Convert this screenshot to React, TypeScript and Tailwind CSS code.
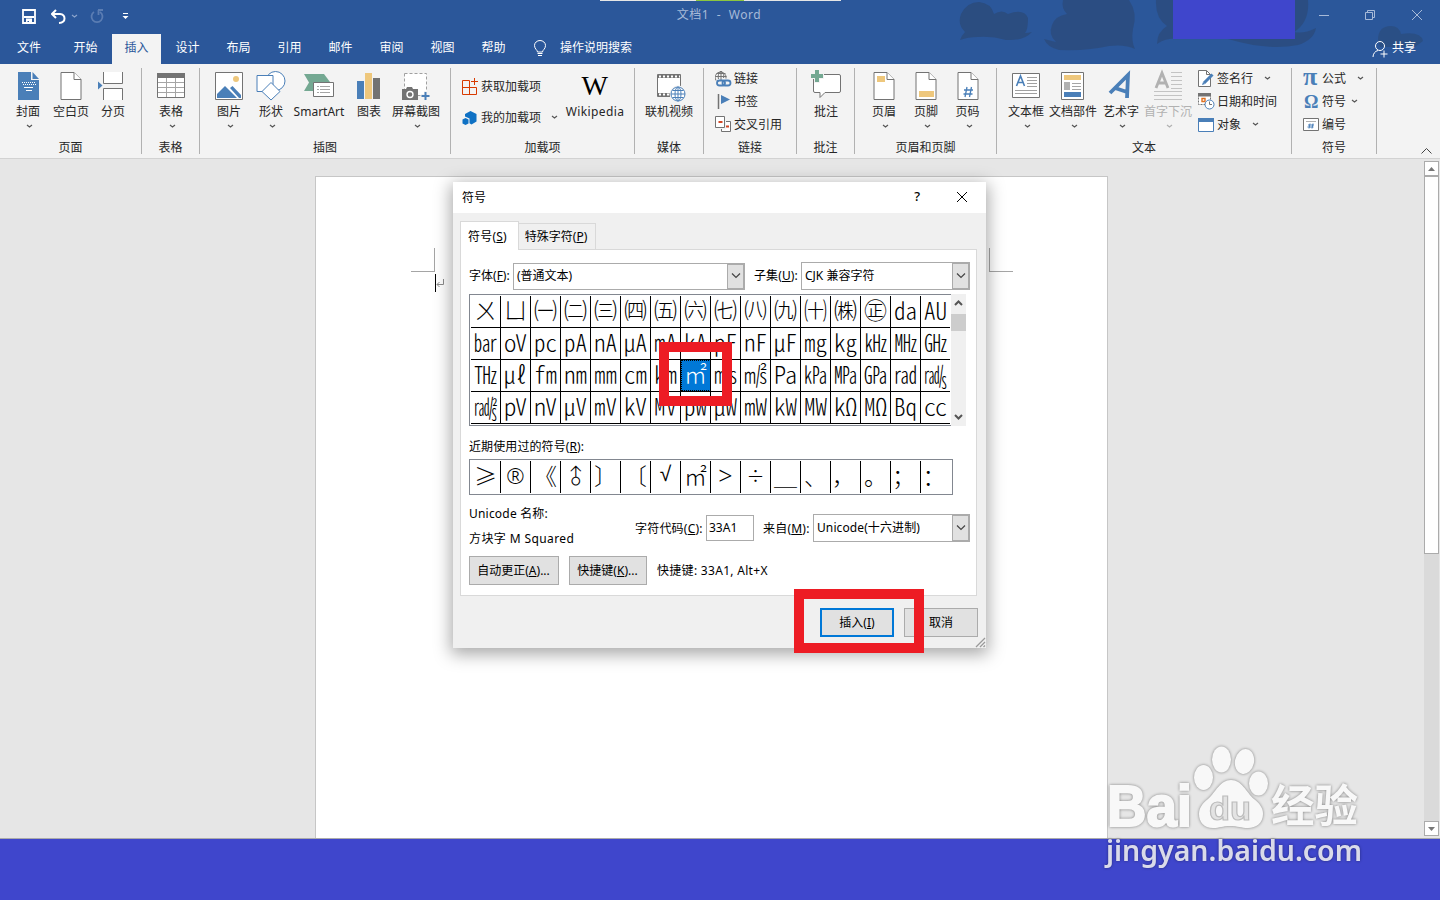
import type { ReactNode } from "react";

const UI = "font-['Noto_Sans','Noto_Sans_CJK_SC',sans-serif]";
const BLUE = "#4a7fb8";
const GRAY = "#737373";
const GOLD = "#eec77c";

const TABS = ["开始", "插入", "设计", "布局", "引用", "邮件", "审阅", "视图", "帮助"];

const SYMBOLS = [
  "ㄨㄩ㈠㈡㈢㈣㈤㈥㈦㈧㈨㈩㈱㊣㍲㍳",
  "㍴㍵㍶㎀㎁㎂㎃㎄㎊㎋㎌㎎㎏㎑㎒㎓",
  "㎔㎕㎙㎚㎜㎝㎞㎡㎧㎨㎩㎪㎫㎬㎭㎮",
  "㎯㎴㎵㎶㎷㎸㎹㎺㎼㎽㎾㎿㏀㏁㏃㏄",
];
const RECENT = ["≥", "®", "《", "♂", "〕", "〔", "√", "㎡", ">", "÷", "＿", "、", "，", "。", "；", "："];

// a few glyphs need another face or a turn to look right at this size
const GLYPH_STYLE: Record<string, string> = {
  "®": "font-['Noto_Sans',sans-serif] text-[22px] font-light",
  "♂": "-rotate-45 text-[21px]",
  "√": "font-['DejaVu_Sans',sans-serif] text-[21px] pb-0.5",
  ">": "font-['Noto_Sans',sans-serif] text-[25px] font-light",
  "÷": "text-[18px]",
  "，": "-ml-1",
  "；": "-ml-1",
  "：": "-ml-1",
};

function Chevron({ className = "", color = "#555" }: { className?: string; color?: string }) {
  return (
    <svg width="7" height="5" viewBox="0 0 7 5" className={`shrink-0 ${className}`}>
      <path d="M1 1l2.500 2L6 1" fill="none" stroke={color} strokeWidth="1.200" />
    </svg>
  );
}

function Group({ width, label, children }: { width: string; label: string; children: ReactNode }) {
  return (
    <div className={`flex shrink-0 ${width}`}>
      <div className="flex flex-1 min-w-0 flex-col">
        <div className="flex h-[76px]">{children}</div>
        <div className="h-4 text-center leading-4">{label}</div>
      </div>
      <div className="mt-1 h-[86px] w-px bg-[#b1b1b1]" />
    </div>
  );
}

interface BigProps { width: string; label: string; arrow?: boolean; disabled?: boolean; iconClass?: string; children: ReactNode; }

function Big({ width, label, arrow, disabled, iconClass = "", children }: BigProps) {
  return (
    <div className={`flex shrink-0 flex-col items-center pt-1 ${width} ${disabled ? "text-[#b1b1b1]" : ""}`}>
      <div className={`flex h-[34px] ${iconClass}`}>{children}</div>
      <div className="mt-0.5 h-4 leading-4 whitespace-nowrap">{label}</div>
      {arrow && <Chevron className="mt-1 ml-[3px]" color={disabled ? "#b1b1b1" : "#555"} />}
    </div>
  );
}

function Small({ label, arrow, gap = "ml-[11px]", children }: { label: string; arrow?: boolean; gap?: string; children: ReactNode }) {
  return (
    <div className="flex h-[23px] items-center whitespace-nowrap">
      <div className="w-[19px] shrink-0">{children}</div>
      {label}
      {arrow && <Chevron className={gap} />}
    </div>
  );
}

function Page({ children }: { children?: ReactNode }) {
  return (
    <svg width="22" height="34" viewBox="0 0 22 34">
      <path d="M1 4.500h13l7 7v20H1z" fill="#fff" stroke={GRAY} />
      <path d="M14 4.500v7h7" fill="#fff" stroke={GRAY} />
      {children}
    </svg>
  );
}

function PagesGroup() {
  return (
    <Group width="w-[142px]" label="页面">
      <Big width="w-[42px] ml-[7px]" label="封面" arrow>
        <svg width="21" height="34" viewBox="0 0 21 34">
          <path d="M0 4h13v8h8v20H0z" fill={BLUE} />
          <path d="M14.500 4l6.500 7h-6.500z" fill={BLUE} />
          <path d="M4 14.500h13M5 16.500h13" stroke="#fff" strokeDasharray="1 1" />
          <path d="M6 19.500h9M8 22.500h6" stroke="#fff" />
        </svg>
      </Big>
      <Big width="w-11" label="空白页"><Page /></Big>
      <Big width="w-10" label="分页" iconClass="-ml-1">
        <svg width="26" height="34" viewBox="0 0 26 34">
          <path d="M5 4h20v11H5zM5 20.500h20V32H5z" fill="#fff" />
          <path d="M5.500 4v11.500h19V4M5.500 32V20.500h19V32" fill="none" stroke={GRAY} />
          <path d="M0 13.500l4.500 4-4.500 4z" fill={BLUE} />
        </svg>
      </Big>
    </Group>
  );
}

function TablesGroup() {
  return (
    <Group width="w-[58px]" label="表格">
      <Big width="w-[58px]" label="表格" arrow>
        <svg width="28" height="34" viewBox="0 0 28 34">
          <path d="M.5 5.500h27v24H.5z" fill="#fff" stroke={GRAY} />
          <path d="M0 5h28v5H0z" fill={GRAY} />
          <path d="M1 14.500h26M1 19.500h26M1 24.500h26M9.500 10v19M18.500 10v19" stroke="#a5a5a5" />
        </svg>
      </Big>
    </Group>
  );
}

function IllustrationsGroup() {
  return (
    <Group width="w-[251px]" label="插图">
      <Big width="w-[42px] ml-2" label="图片" arrow>
        <svg width="28" height="34" viewBox="0 0 28 34">
          <path d="M.5 4.500h27v27H.5z" fill="#fff" stroke={GRAY} />
          <circle cx="21" cy="11" r="3" fill={GOLD} />
          <path d="M2 30v-4l8-8 12 12z" fill={BLUE} />
          <path d="M15 20l2.500-2 8.500 9v3h-2z" fill={BLUE} />
        </svg>
      </Big>
      <Big width="w-[42px]" label="形状" arrow>
        <svg width="30" height="34" viewBox="0 0 30 34">
          <circle cx="19.500" cy="13" r="9.500" fill="#fff" stroke={BLUE} />
          <path d="M1 7.500h16v16H1z" fill="#fff" stroke={BLUE} />
          <path d="M15 14.500l9 9-9 8.500-9-8.500z" fill="#fff" stroke={BLUE} />
        </svg>
      </Big>
      <Big width="w-[54px]" label="SmartArt">
        <svg width="30" height="34" viewBox="0 0 30 34">
          <path d="M0 6h20l6 8H10v9H0l5-8.500z" fill="#74a892" />
          <path d="M9.500 14.500h20v14h-20z" fill="#fff" stroke={GRAY} />
          <path d="M13 18.500h2M16 18.500h10M13 21.500h2M16 21.500h10M13 24.500h2M16 24.500h10" stroke="#a5a5a5" />
        </svg>
      </Big>
      <Big width="w-[46px]" label="图表">
        <svg width="24" height="34" viewBox="0 0 24 34">
          <path d="M0 13h7v18H0z" fill={BLUE} />
          <path d="M8 5h7v26H8z" fill={GOLD} />
          <path d="M16 10h7v21h-7z" fill={GRAY} />
        </svg>
      </Big>
      <Big width="w-12" label="屏幕截图" arrow>
        <svg width="30" height="34" viewBox="0 0 30 34">
          <path d="M3.500 5.500h22v22h-22z" fill="#fff" stroke="#a0a0a0" strokeDasharray="3 2" />
          <path d="M1 21h4l1-2h5l1 2h5v11H1z" fill={GRAY} />
          <circle cx="9" cy="26.500" r="3" fill="none" stroke="#fff" strokeWidth="1.400" />
          <path d="M25 23v10M20 28h10" stroke="#f3f3f3" strokeWidth="4" />
          <path d="M24.500 24v8M20.500 28h8" stroke={BLUE} strokeWidth="2" />
        </svg>
      </Big>
    </Group>
  );
}

function AddinsGroup() {
  return (
    <Group width="w-[184px]" label="加载项">
      <div className="ml-[11px] flex w-[97px] shrink-0 flex-col gap-2 pt-[11px]">
        <Small label="获取加载项">
          <svg width="16" height="17" viewBox="0 0 16 17" fill="none" stroke="#d83b01">
            <path d="M7.500 2.500h-7v14h14v-7H.5M7.500 2.500v14M12.500 0v7M9 3.500h7" />
          </svg>
        </Small>
        <Small label="我的加载项" arrow gap="ml-[10px]">
          <svg width="16" height="16" viewBox="0 0 16 16" fill="#0f71c4">
            <path d="M8.500 1l6 3v7.500l-5 3-2-1.300V8.500L3 6.500V4z" />
            <path d="M3.500 8l3 1.500v4l-3 1.500-3-1.500v-4z" />
          </svg>
        </Small>
      </div>
      <Big width="w-[72px] tracking-[0.4px]" label="Wikipedia">
        <span className="pt-0.5 font-['Liberation_Serif',serif] text-[28px] leading-8 text-black">W</span>
      </Big>
    </Group>
  );
}

function MediaGroup() {
  return (
    <Group width="w-[69px]" label="媒体">
      <Big width="w-[68px]" label="联机视频" iconClass="ml-1">
        <svg width="29" height="34" viewBox="0 0 29 34">
          <path d="M.5 6.500h23v22H.5z" fill="#fff" stroke={GRAY} />
          <path d="M1 8.500h22M1 26.500h13" stroke={GRAY} strokeWidth="3" />
          <path d="M2 8.500h21M2 26.500h12" stroke="#fff" strokeWidth="2" strokeDasharray="2 2" />
          <circle cx="21" cy="26" r="8.500" fill="#f3f3f3" />
          <g fill="#fff" stroke={BLUE}>
            <circle cx="21" cy="26" r="7" />
            <ellipse cx="21" cy="26" rx="3" ry="7" />
            <path d="M21 19v14M14 26h14M15.500 22.500h11M15.500 29.500h11" />
          </g>
        </svg>
      </Big>
    </Group>
  );
}

function LinksGroup() {
  return (
    <Group width="w-[93px]" label="链接">
      <div className="ml-[11px] pt-[3px]">
        <Small label="链接">
          <svg width="17" height="17" viewBox="0 0 17 17" fill="none">
            <g stroke={GRAY}>
              <path d="M1 10.500a5.500 5.500 0 1 1 10-2" />
              <path d="M6 1v9M.5 6.500h11M1.500 3.500h9M3.500 9c-1-3 0-6 2.500-8 2.500 2 3.500 5 2.500 7" />
            </g>
            <g stroke={BLUE} strokeWidth="1.800">
              <rect x="2" y="10.500" width="8" height="5" rx="2.500" />
              <rect x="7.500" y="10.500" width="8" height="5" rx="2.500" />
            </g>
          </svg>
        </Small>
        <Small label="书签">
          <svg width="16" height="15" viewBox="0 0 16 15">
            <path d="M3.500 0v15" stroke={GRAY} strokeWidth="1.500" />
            <path d="M6 1l9 4.500L6 10z" fill={BLUE} />
          </svg>
        </Small>
        <Small label="交叉引用">
          <svg width="17" height="17" viewBox="0 0 17 17">
            <path d="M.5 .5h9v11h-9z" fill="#fff" stroke={GRAY} />
            <path d="M11 5.500h4.500v10h-9v-2h4.500z" fill="#fff" />
            <path d="M6.500 13v2.500h9v-10H11" fill="none" stroke={GRAY} />
            <path d="M3.500 6h4M11 10.500h3" stroke="#d24726" strokeWidth="2" />
          </svg>
        </Small>
      </div>
    </Group>
  );
}

function CommentsGroup() {
  return (
    <Group width="w-[58px]" label="批注">
      <Big width="w-[58px]" label="批注">
        <svg width="31" height="34" viewBox="0 0 31 34">
          <path d="M2.500 8q0-1.500 1.500-1.500h24q1.500 0 1.500 1.500v15q0 1.500-1.500 1.500H14l-5 5v-5H4q-1.500 0-1.500-1.500z" fill="#fff" stroke={GRAY} />
          <path d="M6 1v14M-1 8h14" stroke="#f3f3f3" strokeWidth="6" />
          <path d="M6 2v12M0 8h12" stroke="#74a892" strokeWidth="4" />
        </svg>
      </Big>
    </Group>
  );
}

function HeaderFooterGroup() {
  return (
    <Group width="w-[142px]" label="页眉和页脚">
      <Big width="w-[42px] ml-2" label="页眉" arrow>
        <Page><path d="M4 8h8v6H4z" fill={GOLD} /></Page>
      </Big>
      <Big width="w-[42px]" label="页脚" arrow>
        <Page><path d="M4 23h15v6H4z" fill={GOLD} /></Page>
      </Big>
      <Big width="w-[41px]" label="页码" arrow>
        <Page><path d="M10 19l-2 10M14.500 19l-2 10M7 22h9M6.500 26h9" stroke={BLUE} strokeWidth="1.300" /></Page>
      </Big>
    </Group>
  );
}

function TextGroup() {
  return (
    <Group width="w-[295px]" label="文本">
      <Big width="w-[42px] ml-2" label="文本框" arrow>
        <svg width="28" height="34" viewBox="0 0 28 34">
          <path d="M.5 5.500h27v24H.5z" fill="#fff" stroke={GRAY} />
          <path d="M4.500 18l4-10 4 10M6 14.500h5" fill="none" stroke={BLUE} strokeWidth="1.600" />
          <path d="M15 9.500h10M15 12.500h10M15 15.500h10M15 18.500h10M3 22.500h22M3 25.500h22" stroke="#a0a0a0" />
        </svg>
      </Big>
      <Big width="w-[52px]" label="文档部件" arrow iconClass="-ml-0.5">
        <svg width="23" height="34" viewBox="0 0 23 34">
          <path d="M.5 4.500h22v27H.5z" fill="#fff" stroke={GRAY} />
          <path d="M3 7h17v5H3z" fill={GOLD} />
          <path d="M3 14h6v8H3z" fill="#b1b1b1" />
          <path d="M11 15.500h9M11 18.500h9M11 21.500h9" stroke="#a5a5a5" />
          <path d="M3 24h17v5H3z" fill={BLUE} />
        </svg>
      </Big>
      <Big width="w-11" label="艺术字" arrow>
        <svg width="26" height="34" viewBox="0 0 26 34">
          <path d="M2 25L20 7l-1 23M7 20l12 4" fill="none" stroke={BLUE} strokeWidth="3.800" />
        </svg>
      </Big>
      <Big width="w-[50px]" label="首字下沉" arrow disabled>
        <svg width="28" height="34" viewBox="0 0 28 34">
          <path d="M2 20L8 5l6 15M4 15h8" fill="none" stroke="#b1b1b1" strokeWidth="2.800" />
          <path d="M17 4.500h11M17 8.500h11M17 12.500h11M17 16.500h11M17 20.500h11M0 23.500h28M0 27.500h28M0 31.500h28" stroke="#c3c3c3" />
        </svg>
      </Big>
      <div className="ml-[5px] pt-[3px]">
        <Small label="签名行" arrow>
          <svg width="17" height="17" viewBox="0 0 17 17">
            <path d="M.5 .5h8l4 4v12H.5z" fill="#fff" stroke={GRAY} />
            <path d="M8.500 .5v4h4" fill="none" stroke={GRAY} />
            <path d="M6 13l8.500-8.500" stroke={BLUE} strokeWidth="3" />
            <path d="M4 15l1-3 2 2z" fill={BLUE} />
          </svg>
        </Small>
        <Small label="日期和时间">
          <svg width="17" height="17" viewBox="0 0 17 17">
            <path d="M.5 1.500h12v10H.5z" fill="#fff" stroke={GRAY} strokeDasharray="2 1" />
            <path d="M0 0h13v3.500H0z" fill={GRAY} />
            <path d="M4 5.500h3v3H4z" fill="none" stroke="#e07020" strokeWidth="1.400" />
            <circle cx="11.500" cy="11.500" r="4.500" fill="#fff" stroke={BLUE} />
            <path d="M11.500 8.500v3H14" fill="none" stroke={GRAY} />
          </svg>
        </Small>
        <Small label="对象" arrow>
          <svg width="16" height="14" viewBox="0 0 16 14">
            <path d="M.5 .5h15v13H.5z" fill="#fff" stroke={BLUE} />
            <path d="M0 0h16v4H0z" fill={BLUE} />
          </svg>
        </Small>
      </div>
    </Group>
  );
}

function SymbolsGroup() {
  return (
    <Group width="w-[85px]" label="符号">
      <div className="ml-[11px] pt-[3px]">
        <Small label="公式" arrow>
          <span className="block pb-1 font-['Liberation_Serif',serif] text-[26px] font-bold leading-4 text-[#4a7fb8]">π</span>
        </Small>
        <Small label="符号" arrow gap="ml-[5px]">
          <span className="block pl-px font-['Liberation_Serif',serif] text-[18px] font-bold leading-4 text-[#4a7fb8]">Ω</span>
        </Small>
        <Small label="编号">
          <svg width="16" height="14" viewBox="0 0 16 14">
            <path d="M.5 .5h15v12H.5z" fill="#fff" stroke={GRAY} />
            <path d="M3 3.500h10" stroke="#b1b1b1" />
            <path d="M7 5.500l-1 5M10 5.500l-1 5M5 7h6M4.500 9h6" stroke={BLUE} />
          </svg>
        </Small>
      </div>
    </Group>
  );
}

function TitleBar() {
  return (
    <div className="relative h-16 bg-[#2b579a] text-white">
      <svg className="absolute inset-0" width="1440" height="64" viewBox="0 0 1440 64" fill="#2b4d80">
        <path d="M960 40q2-5 5-8-8-8-4-18 6-12 18-12 12 1 15 12 8-5 14 0 16-6 20 4 0 12-3 15 3 0 7-1-8 9-26 8-14-4-28-3-10 0-18 3z" />
        <path d="M1063 0q-2 8 4 14-12 2-15 11-4 10 4 17l-12-3q3 8 15 11 30 1 50-4 16-2 26 3-4-8-2-20 5-16-4-29z" opacity=".9" />
        <path d="M1156 0h152q2 22-14 32 10 2 22-4-2 12-18 17-30 6-70-6h-45q-16-2-26 5 0-12 10-18-12-8-11-26z" opacity=".9" />
        <path d="M1378 40q0-14 13-14 8 0 10 8 20-3 22 7l-8 6h-35z" opacity=".8" />
      </svg>
      <div className="absolute top-0 left-[600px] flex h-px w-[241px] bg-[#e6e6e6]"><div className="ml-24 w-12 bg-[#8cc63f]" /></div>
      <div className="absolute top-0 left-[1173px] h-[39px] w-[122px] bg-[#3f46cc]" />
      <div className="relative flex h-[34px] items-start pt-2">
        <div className="flex w-[600px] items-center pl-[22px]">
          <svg width="14" height="16" viewBox="0 0 14 16">
            <path d="M1 2h12v13H1zM2 9h10" fill="none" stroke="#fff" strokeWidth="1.800" />
            <path d="M4 10.500h6V15H7v-2H5.500v2H4z" fill="#fff" />
          </svg>
          <svg className="ml-[15px]" width="15" height="15" viewBox="0 0 15 15" fill="none" stroke="#fff" strokeWidth="2">
            <path d="M5 1L1 5l4 4M1.500 5H9q4.500.5 4.500 4.500T8 14" />
          </svg>
          <Chevron className="ml-[5px]" color="#8ba4cc" />
          <svg className="ml-3" width="14" height="15" viewBox="0 0 14 15" fill="none" stroke="#5b7db3" strokeWidth="1.800">
            <path d="M4 3A5.500 5.500 0 1 0 10 3M8 1h5M8.500 1v5" />
          </svg>
          <svg className="ml-[18px]" width="7" height="7" viewBox="0 0 7 7" fill="#fff">
            <path d="M1 0h5v1H1zM.5 3h6l-3 3z" />
          </svg>
        </div>
        <div className="-mt-px -ml-0.5 w-[242px] text-center leading-4 tracking-[0.6px] whitespace-pre text-[#a7bad8]">文档1  -  Word</div>
        <div className="ml-auto mr-[18px] flex gap-[38px] pt-px">
          <svg width="12" height="12" viewBox="0 0 12 12"><path d="M1 6.500h10" stroke="#a7bad8" /></svg>
          <svg className="-mr-[3px] -ml-[4px]" width="12" height="12" viewBox="0 0 12 12" fill="none" stroke="#a7bad8"><path d="M1.500 3.500h7v7h-7zM3.500 3V1.500h7v7H9" /></svg>
          <svg className="-mr-px" width="12" height="12" viewBox="0 0 12 12" stroke="#a7bad8"><path d="M1 1l10 10M11 1L1 11" /></svg>
        </div>
      </div>
      <div className="relative flex h-[30px] items-stretch leading-[28px]">
        <div className="mr-[2px] w-[58px] text-center">文件</div>
        {TABS.map((tab) => (
          <div key={tab} className="w-[51px] px-px text-center">
            <div className={tab === "插入" ? "h-full bg-[#f3f3f3] text-[#2b579a]" : ""}>{tab}</div>
          </div>
        ))}
        <svg className="mt-[6px] ml-[14px]" width="14" height="18" viewBox="0 0 14 18" fill="none" stroke="#fff">
          <path d="M4.500 12c0-2-3-3-3-6.500a5.500 5 0 0 1 11 0c0 3.500-3 4.500-3 6.500zM4.500 13.500h5M5 15.500h4" />
        </svg>
        <span className="ml-[13px]">操作说明搜索</span>
        <svg className="mt-[7px] ml-auto" width="16" height="17" viewBox="0 0 16 17" fill="none" stroke="#fff">
          <circle cx="8" cy="5" r="4.500" />
          <path d="M1 16c0-3 2-6 5-6.500M12 9.500v7M8.500 13h7" />
        </svg>
        <span className="mr-6 ml-1">共享</span>
      </div>
    </div>
  );
}

function DocumentArea() {
  return (
    <div className="flex h-[679px] bg-[#e6e6e6]">
      <div className="mt-[17px] ml-[315px] h-[662px] w-[793px] border border-b-0 border-[#c6c6c6] bg-white pt-[71px]">
        <div className="flex justify-between px-[95px] pr-[94px]">
          <div className="h-6 w-6 border-r border-b border-[#a5a5a5]" />
          <div className="h-6 w-6 border-b border-l border-[#a5a5a5]" />
        </div>
        <div className="ml-[119px] mt-[2px] flex items-center">
          <div className="h-[18px] w-px bg-black" />
          <svg width="8" height="9" viewBox="0 0 8 9" fill="none" stroke="#8c8c8c"><path d="M7.500 0v5.500H1M3.500 3L1 5.500 3.500 8" /></svg>
        </div>
      </div>
      <div className="mt-[2px] mr-px ml-auto flex h-[675px] w-[15px] flex-col bg-[#dadada]">
        <div className="flex h-[15px] items-center justify-center border border-[#ababab] bg-white">
          <svg width="7" height="4"><path d="M0 4l3.500-4L7 4z" fill="#777" /></svg>
        </div>
        <div className="h-[378px] border border-[#ababab] bg-white" />
        <div className="mt-auto flex h-[15px] items-center justify-center border border-[#ababab] bg-white">
          <svg width="7" height="4"><path d="M0 0l3.500 4L7 0z" fill="#777" /></svg>
        </div>
      </div>
    </div>
  );
}

function Label({ text, k, tail = "" }: { text: string; k: string; tail?: string }) {
  return <span className="whitespace-nowrap">{text}(<u className="underline-offset-1">{k}</u>){tail}</span>;
}

function Select({ value, className }: { value: string; className: string }) {
  return (
    <div className={`flex border border-[#ababab] bg-white ${className}`}>
      <span className="flex flex-1 items-center pb-px pl-[3px]">{value}</span>
      <span className="flex w-[17px] items-center justify-center border border-[#ababab] bg-[#e1e1e1]">
        <svg width="10" height="6" viewBox="0 0 10 6" fill="none" stroke="#444" strokeWidth="1.200"><path d="M1 .5l4 4 4-4" /></svg>
      </span>
    </div>
  );
}

function SymbolGrid() {
  return (
    <div className="mt-1 flex h-[132px] font-['Noto_Sans_CJK_SC',sans-serif] text-[23px] leading-none font-light">
      <div className="w-[482px] border-y border-l border-[#828790] pt-px pl-px">
        {SYMBOLS.map((row) => (
          <div key={row} className="mr-px flex h-8 border-b border-black">
            {[...row].map((ch) => (
              <div
                key={ch}
                className={`flex w-[30px] shrink-0 items-center justify-center border-r border-black pb-1 last:w-[29px] last:border-r-0 ${ch === "㎡" ? "bg-[#0078d7] text-white outline-1 -outline-offset-1 outline-dotted outline-black" : ""}`}
              >
                {ch}
              </div>
            ))}
          </div>
        ))}
      </div>
      <div className="flex w-[15px] flex-col items-center bg-[#f0f0f0]">
        <svg className="mt-1.5" width="9" height="6" viewBox="0 0 9 6" fill="none" stroke="#555" strokeWidth="2"><path d="M1 5l3.500-3.500L8 5" /></svg>
        <div className="mt-2 h-[17px] w-[15px] bg-[#cdcdcd]" />
        <svg className="mt-auto mb-1.5" width="9" height="6" viewBox="0 0 9 6" fill="none" stroke="#555" strokeWidth="2"><path d="M1 1l3.500 3.500L8 1" /></svg>
      </div>
    </div>
  );
}

function SymbolDialog() {
  return (
    <div className="absolute top-[182px] left-[453px] h-[466px] w-[533px] bg-[#f0f0f0] text-black shadow-[0_4px_16px_2px_rgba(0,0,0,0.35)]">
      <div className="flex h-[31px] items-center bg-white pl-[9px]">
        符号
        <span className="ml-auto pb-0.5 text-[13px] font-medium">?</span>
        <svg className="mr-[18px] mb-px ml-9" width="12" height="12" viewBox="0 0 12 12" stroke="#000"><path d="M1 1l10 10M11 1L1 11" /></svg>
      </div>
      <div className="flex h-9 items-end pl-[7px]">
        <div className="relative z-10 -mb-px flex h-[29px] w-[59px] items-center justify-center border border-b-0 border-[#d9d9d9] bg-white pt-0.5 pr-1 tracking-[0.2px]"><Label text="符号" k="S" /></div>
        <div className="flex h-[26px] w-[77px] items-center justify-center border border-b-0 border-l-0 border-[#d9d9d9] pt-px pr-0.5"><Label text="特殊字符" k="P" /></div>
      </div>
      <div className="ml-[7px] h-[347px] w-[517px] border border-[#d9d9d9] bg-white pt-3 pl-2">
        <div className="flex h-7 items-center">
          <span className="w-11"><Label text="字体" k="F" tail=":" /></span>
          <Select value="(普通文本)" className="h-[27px] w-[232px]" />
          <span className="ml-[9px] w-[47px] tracking-[0.1px]"><Label text="子集" k="U" tail=":" /></span>
          <Select value="CJK 兼容字符" className="h-7 w-[169px]" />
        </div>
        <SymbolGrid />
        <div className="h-[33px] pt-[13px] leading-4 tracking-[0.1px]"><Label text="近期使用过的符号" k="R" tail=":" /></div>
        <div className="flex h-9 w-[484px] border border-[#828790] py-px pl-px font-['Noto_Sans_CJK_SC',sans-serif] text-[23px] leading-none font-light">
          {RECENT.map((ch) => (
            <div key={ch} className="flex w-[30px] shrink-0 items-center justify-center border-r border-black pb-1 last:border-r-0">
              <span className={`block ${GLYPH_STYLE[ch] ?? ""}`}>{ch}</span>
            </div>
          ))}
        </div>
        <div className="flex h-[61px]">
          <div className="w-[166px] pt-[11px]">
            <p className="h-[25px] leading-4 tracking-[0.2px]">Unicode 名称:</p>
            <p className="leading-4 tracking-[0.4px]">方块字 M Squared</p>
          </div>
          <div className="mt-[19px] flex h-7 items-center">
            <span className="w-[71px] pt-px tracking-[0.2px]"><Label text="字符代码" k="C" tail=":" /></span>
            <span className="h-[26px] w-12 border border-[#ababab] pl-0.5 leading-[23px]">33A1</span>
            <span className="ml-[9px] w-[50px] pt-px tracking-[0.2px]"><Label text="来自" k="M" tail=":" /></span>
            <Select value="Unicode(十六进制)" className="h-7 w-[157px] tracking-[0.1px]" />
          </div>
        </div>
        <div className="flex h-[29px] items-stretch leading-[27px]">
          <div className="w-[90px] border border-[#ababab] bg-[#e1e1e1] pr-px text-center"><Label text="自动更正" k="A" tail="..." /></div>
          <div className="ml-2.5 w-[78px] border border-[#ababab] bg-[#e1e1e1] pr-px text-center"><Label text="快捷键" k="K" tail="..." /></div>
          <span className="ml-2.5 pt-px tracking-[0.3px]">快捷键: 33A1, Alt+X</span>
        </div>
      </div>
      <div className="mt-3 flex justify-end gap-2.5 pr-2 text-center">
        <div className="h-[29px] w-[74px] border-2 border-[#0078d7] bg-[#e1e1e1] leading-[25px]"><Label text="插入" k="I" /></div>
        <div className="h-[29px] w-[74px] border border-[#ababab] bg-[#e1e1e1] leading-[27px]">取消</div>
      </div>
      <svg className="absolute right-0 bottom-0" width="11" height="11" viewBox="0 0 11 11" stroke="#9a9a9a" strokeWidth="1.300"><path d="M1 10l9-9M5 10l5-5M8.500 10L10 8.500" /></svg>
      <div className="absolute top-[160px] left-[206px] h-16 w-[73px] border-[10px] border-[#ed1c24]" />
      <div className="absolute top-[407px] left-[341px] h-16 w-[130px] border-[10px] border-[#ed1c24]" />
    </div>
  );
}

function Watermark() {
  return (
    <svg className="absolute top-[740px] left-[1095px] drop-shadow-[0_0_1.5px_rgba(0,0,0,0.45)]" width="280" height="135" viewBox="0 0 280 135" fill="#f8f8f8" fillOpacity=".85">
      <text x="12" y="86" fontFamily="Liberation Sans, sans-serif" fontSize="58" fontWeight="700" fillOpacity="1" textLength="85" lengthAdjust="spacingAndGlyphs" stroke="#f8f8f8" strokeWidth="2">Bai</text>
      <g fillOpacity="1">
        <ellipse cx="108.500" cy="37.500" rx="9.500" ry="12.500" />
        <ellipse cx="126.500" cy="19.500" rx="9.500" ry="13" />
        <ellipse cx="149.500" cy="21.500" rx="9.500" ry="12.500" transform="rotate(12 149.500 21.500)" />
        <ellipse cx="163.500" cy="43.500" rx="9.500" ry="12" />
        <path d="M136 40c11 0 15 12 23 19 6 5 9 9 9 15 0 9-7 14-15 14-7 0-10-2-18-2s-10 2-17 2c-9 0-14-6-14-14 0-6 3-10 9-15 8-7 12-19 23-19z" />
      </g>
      <text x="114" y="80" fontFamily="Liberation Sans, sans-serif" fontSize="34" fontWeight="700" fill="#e3e3e3" fillOpacity="1" stroke="#bcbcbc" strokeWidth="1.200" textLength="42" lengthAdjust="spacingAndGlyphs">du</text>
      <text x="176" y="82" fontFamily="Noto Sans CJK SC, sans-serif" fontSize="44" fontWeight="700" fillOpacity="1" textLength="87" lengthAdjust="spacingAndGlyphs">经验</text>
      <text x="11" y="121" fontFamily="Noto Sans, sans-serif" fontSize="28" fontWeight="600" textLength="256" lengthAdjust="spacingAndGlyphs">jingyan.baidu.com</text>
    </svg>
  );
}

export default function App() {
  return (
    <div className={`relative h-[900px] w-[1440px] overflow-hidden bg-[#3f46cc] text-[12px] text-[#262626] ${UI}`}>
      <TitleBar />
      <div className="flex h-[95px] border-b border-[#d2d2d2] bg-[#f3f3f3]">
        <PagesGroup />
        <TablesGroup />
        <IllustrationsGroup />
        <AddinsGroup />
        <MediaGroup />
        <LinksGroup />
        <CommentsGroup />
        <HeaderFooterGroup />
        <TextGroup />
        <SymbolsGroup />
        <svg className="mt-auto mr-2 mb-1 ml-auto" width="11" height="6" viewBox="0 0 11 6" fill="none" stroke="#444"><path d="M.5 5.500l5-5 5 5" /></svg>
      </div>
      <DocumentArea />
      <div className="h-px bg-[#ababab]" />
      <SymbolDialog />
      <Watermark />
    </div>
  );
}
